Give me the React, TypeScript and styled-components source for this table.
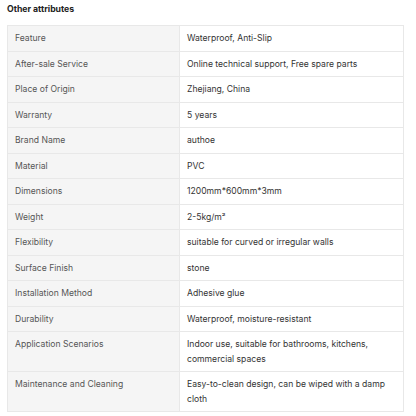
import React from "react";
import styled, { createGlobalStyle } from "styled-components";

const Global = createGlobalStyle`
  html, body { margin: 0; padding: 0; background: #fff; }
  body { font-family: Inter, "Noto Sans", sans-serif; }
`;

const Page = styled.div`
  padding: 4px 12px 0 7px;
  width: 416px;
  box-sizing: border-box;
`;

const Title = styled.h3`
  margin: 0 0 10px 0;
  font-size: 8.7px;
  line-height: 11px;
  font-weight: 700;
  color: #222;
`;

const Table = styled.table`
  width: 397px;
  border-collapse: collapse;
  table-layout: fixed;
  font-size: 8.6px;
  line-height: 14.5px;
`;

const Label = styled.td`
  width: 157px;
  background: #f5f5f5;
  color: #555;
  border: 1px solid #e8e8e8;
  padding: 5px 7px;
  vertical-align: top;
`;

const Value = styled.td`
  color: #333;
  border: 1px solid #e8e8e8;
  padding: 5px 7px;
  vertical-align: top;
`;

const rows: [string, string][] = [
  ["Feature", "Waterproof, Anti-Slip"],
  ["After-sale Service", "Online technical support, Free spare parts"],
  ["Place of Origin", "Zhejiang, China"],
  ["Warranty", "5 years"],
  ["Brand Name", "authoe"],
  ["Material", "PVC"],
  ["Dimensions", "1200mm*600mm*3mm"],
  ["Weight", "2-5kg/m²"],
  ["Flexibility", "suitable for curved or irregular walls"],
  ["Surface Finish", "stone"],
  ["Installation Method", "Adhesive glue"],
  ["Durability", "Waterproof, moisture-resistant"],
  ["Application Scenarios", "Indoor use, suitable for bathrooms, kitchens, commercial spaces"],
  ["Maintenance and Cleaning", "Easy-to-clean design, can be wiped with a damp cloth"],
];

export default function App() {
  return (
    <>
      <Global />
      <Page>
        <Title>Other attributes</Title>
        <Table>
          <tbody>
            {rows.map(([k, v]) => (
              <tr key={k}>
                <Label>{k}</Label>
                <Value>{v}</Value>
              </tr>
            ))}
          </tbody>
        </Table>
      </Page>
    </>
  );
}
